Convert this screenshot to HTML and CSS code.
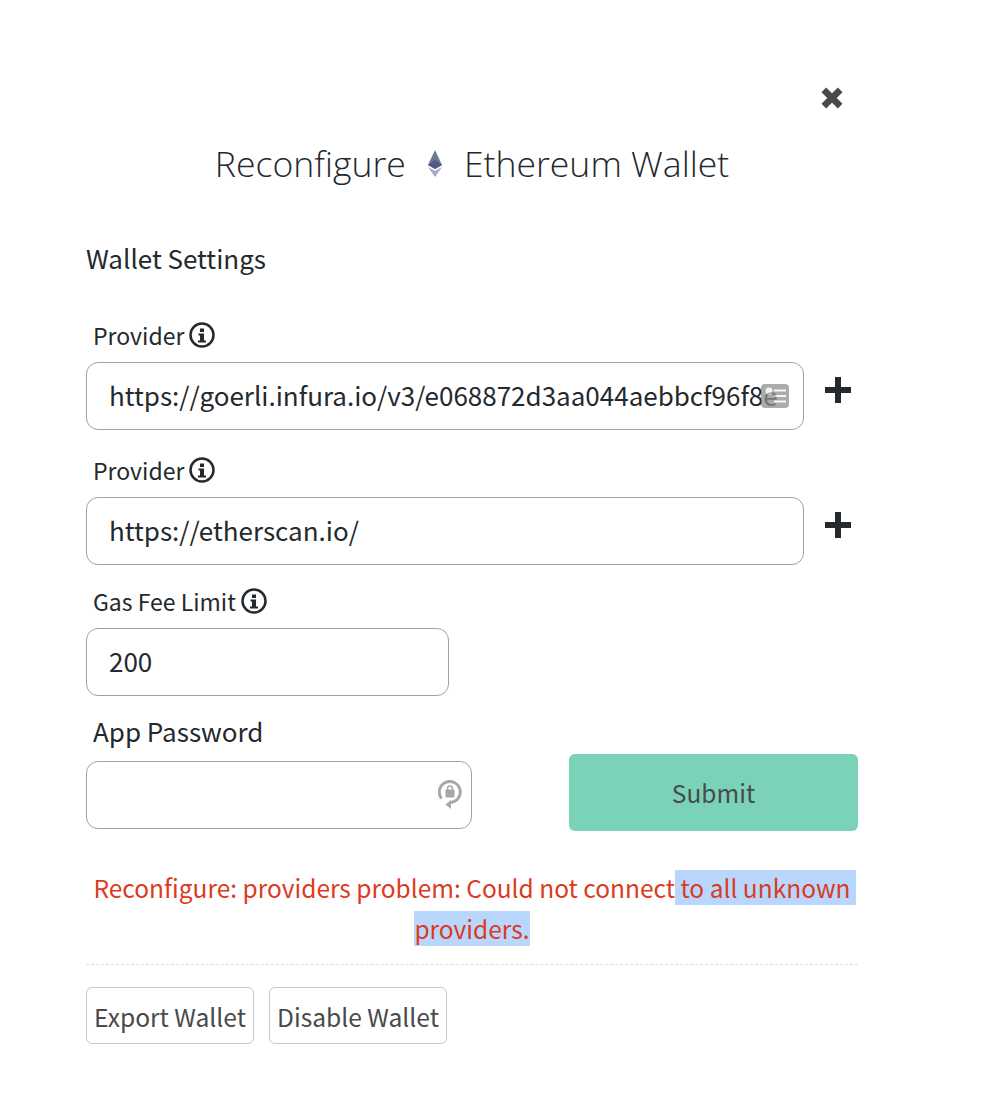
FILE: index.html
```html
<!DOCTYPE html>
<html>

<head>
    <meta name="viewport" content="width=device-width, initial-scale=1">
    <title>Reconfigure Ethereum Wallet</title>
    <link rel="stylesheet" href="styles.css">
</head>

<body>
    <div class="modal">
        <div class="close-row">
            <svg class="close-icon" viewBox="0 0 22 22" aria-label="Close">
                <path d="M3.500 3.500L18.500 18.500M18.500 3.500L3.500 18.500" />
            </svg>
        </div>
        <h2 class="title">
            <span>Reconfigure</span>
            <svg class="eth-icon" viewBox="0 0 14 27">
                <path fill="#6f7799" d="M7 0L0 15l7 4 7-4z" />
                <path fill="#4f5a85" d="M7 10L0 15l7 4 7-4z" />
                <path fill="#a3a9c6" d="M0 17L7 27l7-10-7 4z" />
            </svg>
            <span>Ethereum Wallet</span>
        </h2>

        <h3 class="section-title">Wallet Settings</h3>

        <label class="field-label">Provider
            <svg class="info-icon" viewBox="0 0 26 26">
                <circle cx="13" cy="13" r="11.500" />
                <path class="info-mark" d="M11 6.500h4v3.500h-4zM9.500 11.500h5.500v7h2v2h-8v-2h2v-5h-1.500z" />
            </svg>
        </label>
        <div class="input-row">
            <div class="input-wrap">
                <input class="text-input url-input" type="text" value="https://goerli.infura.io/v3/e068872d3aa044aebbcf96f8e1234567890">
                <svg class="autofill-icon" viewBox="0 0 28 24">
                    <rect width="28" height="24" rx="4" fill="#8f8f8f" />
                    <circle cx="8" cy="7" r="3.500" fill="#f0f0f0" />
                    <path stroke="#f4f4f4" stroke-width="2" d="M13 6.500h12M13 12h12M13 17.500h12" />
                </svg>
            </div>
            <svg class="plus-icon" viewBox="0 0 26 26">
                <path d="M10 0h6v10h10v6h-10v10h-6v-10h-10v-6h10z" />
            </svg>
        </div>

        <label class="field-label">Provider
            <svg class="info-icon" viewBox="0 0 26 26">
                <circle cx="13" cy="13" r="11.500" />
                <path class="info-mark" d="M11 6.500h4v3.500h-4zM9.500 11.500h5.500v7h2v2h-8v-2h2v-5h-1.500z" />
            </svg>
        </label>
        <div class="input-row">
            <div class="input-wrap">
                <input class="text-input" type="text" value="https://etherscan.io/">
            </div>
            <svg class="plus-icon" viewBox="0 0 26 26">
                <path d="M10 0h6v10h10v6h-10v10h-6v-10h-10v-6h10z" />
            </svg>
        </div>

        <label class="field-label gas-label">Gas Fee Limit
            <svg class="info-icon" viewBox="0 0 26 26">
                <circle cx="13" cy="13" r="11.500" />
                <path class="info-mark" d="M11 6.500h4v3.500h-4zM9.500 11.500h5.500v7h2v2h-8v-2h2v-5h-1.500z" />
            </svg>
        </label>
        <input class="text-input gas-input" type="text" value="200">

        <label class="field-label password-label">App Password</label>
        <div class="submit-row">
            <div class="input-wrap password-wrap">
                <input class="text-input" type="password">
                <svg class="lock-icon" viewBox="0 0 24 30">
                    <path class="lock-ring" d="M12 22.500A10.500 10.500 0 1 0 3.500 18.500" />
                    <path class="lock-arrow" d="M7.500 24.500L13 20v9z" />
                    <path class="lock-shackle" d="M9.500 10V8.500a2.500 2.500 0 0 1 5 0V10" />
                    <rect class="lock-body" x="7.500" y="9.500" width="9" height="8" rx="1" />
                </svg>
            </div>
            <button class="submit-button">Submit</button>
        </div>

        <p class="error-text">Reconfigure: providers problem: Could not connect<span class="selected"> to all unknown providers.</span></p>

        <div class="footer-buttons">
            <button class="plain-button">Export Wallet</button>
            <button class="plain-button">Disable Wallet</button>
        </div>
    </div>
</body>

</html>
```

FILE: styles.css
```css
:root {
    --text-color: #24292e;
    --muted-text: #4a4a4a;
    --input-border: #a0a0a0;
    --submit-bg: #7ad3b9;
    --error-color: #dc3a22;
    --selected-bg: #b9d6fd;
}

body {
    background-color: #ffffff;
    color: var(--text-color);
    font-family: "Noto Sans CJK SC", "Noto Sans", sans-serif;
    margin: 0;
    padding: 0;
}

.modal {
    width: 772px;
    margin-left: 86px;
    padding-top: 86px;
}

.close-row {
    display: flex;
    justify-content: flex-end;
    padding-right: 14px;
}

.close-icon {
    width: 24px;
    height: 24px;
    fill: none;
    stroke: #4a4a4a;
    stroke-width: 6;
}

.title {
    display: flex;
    justify-content: center;
    align-items: center;
    gap: 22px;
    font-family: "Open Sans", sans-serif;
    font-size: 35.600px;
    font-weight: 300;
    line-height: 50px;
    margin: 28px 0 0;
}

.eth-icon {
    width: 14px;
    height: 27px;
}

.section-title {
    font-size: 26px;
    font-weight: 400;
    line-height: 36px;
    margin: 52px 0 0;
}

.field-label {
    display: flex;
    align-items: center;
    gap: 5px;
    font-size: 23px;
    line-height: 34px;
    padding-left: 7px;
    margin-top: 42px;
    height: 34px;
}

.info-icon {
    width: 26px;
    height: 26px;
    fill: none;
    stroke: var(--text-color);
    stroke-width: 2.500;
}

.info-mark {
    fill: var(--text-color);
    stroke: none;
}

.input-row {
    display: flex;
    gap: 21px;
    margin-top: 10px;
}

.input-wrap {
    position: relative;
    width: 718px;
}

.text-input {
    display: block;
    box-sizing: border-box;
    width: 100%;
    height: 68px;
    border: 1px solid var(--input-border);
    border-radius: 12px;
    padding: 0 22px 3px;
    font-family: inherit;
    font-size: 26px;
    color: var(--text-color);
    background-color: #ffffff;
    outline: none;
}

.url-input {
    padding-right: 24px;
}

.autofill-icon {
    position: absolute;
    right: 15px;
    top: 22px;
    width: 28px;
    height: 24px;
    opacity: 0.75;
}

.plus-icon {
    width: 26px;
    height: 26px;
    fill: var(--text-color);
    margin-top: 15px;
}

.input-row + .field-label {
    margin-top: 23px;
}

.input-row + .gas-label {
    margin-top: 19px;
}

.gas-input {
    width: 363px;
    margin-top: 10px;
}

.password-label {
    font-size: 26px;
    margin-top: 18px;
}

.submit-row {
    display: flex;
    justify-content: space-between;
    margin-top: 13px;
}

.password-wrap {
    width: 386px;
}

.lock-icon {
    position: absolute;
    right: 10px;
    top: 19px;
    width: 24px;
    height: 30px;
}

.lock-ring {
    fill: none;
    stroke: #a8a8a8;
    stroke-width: 3;
}

.lock-arrow {
    fill: #a8a8a8;
}

.lock-shackle {
    fill: none;
    stroke: #a8a8a8;
    stroke-width: 1.500;
}

.lock-body {
    fill: #a8a8a8;
}

.submit-button {
    width: 289px;
    height: 77px;
    margin-top: -7px;
    border: none;
    border-radius: 6px;
    background-color: var(--submit-bg);
    color: var(--muted-text);
    font-family: inherit;
    font-size: 24.500px;
}

.error-text {
    color: var(--error-color);
    font-size: 24.500px;
    line-height: 41px;
    text-align: center;
    margin: 36px 0 0;
    padding-bottom: 15px;
    border-bottom: 1px dashed #dddddd;
}

.selected {
    background-color: var(--selected-bg);
    white-space: pre-wrap;
}

.footer-buttons {
    display: flex;
    gap: 15px;
    margin-top: 22px;
}

.plain-button {
    height: 57px;
    padding: 0 7px;
    border: 1px solid #c8c8c8;
    border-radius: 6px;
    background-color: #ffffff;
    color: var(--muted-text);
    font-family: inherit;
    font-size: 24.600px;
}
```
